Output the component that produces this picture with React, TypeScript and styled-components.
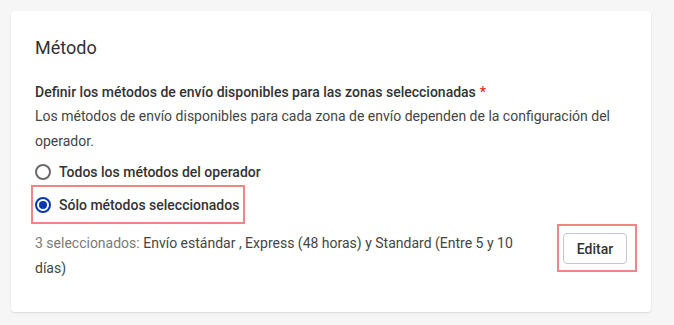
import React from "react";
import styled, { createGlobalStyle } from "styled-components";

const Global = createGlobalStyle`
  html, body { margin: 0; padding: 0; background: #f6f6f6; }
  body { font-family: Roboto, "Noto Sans", Arial, sans-serif; color: #333; }
`;

const Page = styled.div`
  padding: 11px 23px 12px 11px;
`;

const Card = styled.section`
  background: #fff;
  border-radius: 4px;
  box-shadow: 0 1px 2px rgba(0, 0, 0, 0.12);
  padding: 24px 24px 31px 24px;
`;

const Title = styled.h2`
  margin: 0;
  font-size: 18px;
  line-height: 26px;
  font-weight: 400;
  color: #2f3237;
`;

const Label = styled.div`
  margin-top: 19px;
  font-size: 14px;
  line-height: 24px;
  font-weight: 500;
  color: #333;
`;

const Required = styled.span`
  color: #e02b27;
  margin-left: 4px;
`;

const Description = styled.p`
  margin: 0;
  font-size: 14px;
  line-height: 25px;
  color: #454545;
`;

const RadioGroup = styled.div`
  margin-top: 6px;
  display: flex;
  flex-direction: column;
  align-items: flex-start;
  gap: 1px;
`;

const Highlight = styled.div<{ $pad: string }>`
  border: 2px solid #f08585;
  padding: ${(p) => p.$pad};
`;

const RadioHighlight = styled(Highlight)`
  margin-left: -4px;
`;

const RadioRow = styled.label`
  display: flex;
  align-items: center;
  gap: 8px;
  height: 24px;
  font-size: 14px;
  font-weight: 500;
  color: #333;
  cursor: pointer;
`;

const RadioCircle = styled.span<{ $checked: boolean }>`
  box-sizing: border-box;
  width: 16px;
  height: 16px;
  border-radius: 50%;
  border: 2px solid ${(p) => (p.$checked ? "#0a37b0" : "#6b6b6b")};
  display: flex;
  align-items: center;
  justify-content: center;
  &::after {
    content: "";
    width: 8px;
    height: 8px;
    border-radius: 50%;
    background: ${(p) => (p.$checked ? "#0a37b0" : "transparent")};
  }
`;

const SummaryRow = styled.div`
  display: flex;
  align-items: flex-start;
  gap: 17px;
`;

const SummaryText = styled.div`
  flex: 1;
  margin-top: 7px;
  font-size: 14px;
  line-height: 25px;
  color: #454545;
`;

const Muted = styled.span`
  color: #7a7a7a;
`;

const ButtonHighlight = styled(Highlight)`
  margin-right: -10px;
`;

const Button = styled.button`
  box-sizing: border-box;
  display: block;
  height: 31px;
  width: 64px;
  border: 1px solid #c2c7cf;
  border-radius: 4px;
  background: #fff;
  font-family: inherit;
  font-size: 14px;
  font-weight: 500;
  color: #333;
  cursor: pointer;
`;

export default function App() {
  return (
    <>
      <Global />
      <Page>
        <Card>
          <Title>Método</Title>
          <Label>
            Definir los métodos de envío disponibles para las zonas seleccionadas
            <Required>*</Required>
          </Label>
          <Description>
            Los métodos de envío disponibles para cada zona de envío dependen de la
            configuración del operador.
          </Description>
          <RadioGroup>
            <RadioRow>
              <RadioCircle $checked={false} />
              Todos los métodos del operador
            </RadioRow>
            <RadioHighlight $pad="6px 4px 5px 2px">
              <RadioRow>
                <RadioCircle $checked={true} />
                Sólo métodos seleccionados
              </RadioRow>
            </RadioHighlight>
          </RadioGroup>
          <SummaryRow>
            <SummaryText>
              <Muted>3 seleccionados:</Muted> Envío estándar , Express (48 horas) y
              Standard (Entre 5 y 10 días)
            </SummaryText>
            <ButtonHighlight $pad="7px 8px 6px 4px">
              <Button>Editar</Button>
            </ButtonHighlight>
          </SummaryRow>
        </Card>
      </Page>
    </>
  );
}
